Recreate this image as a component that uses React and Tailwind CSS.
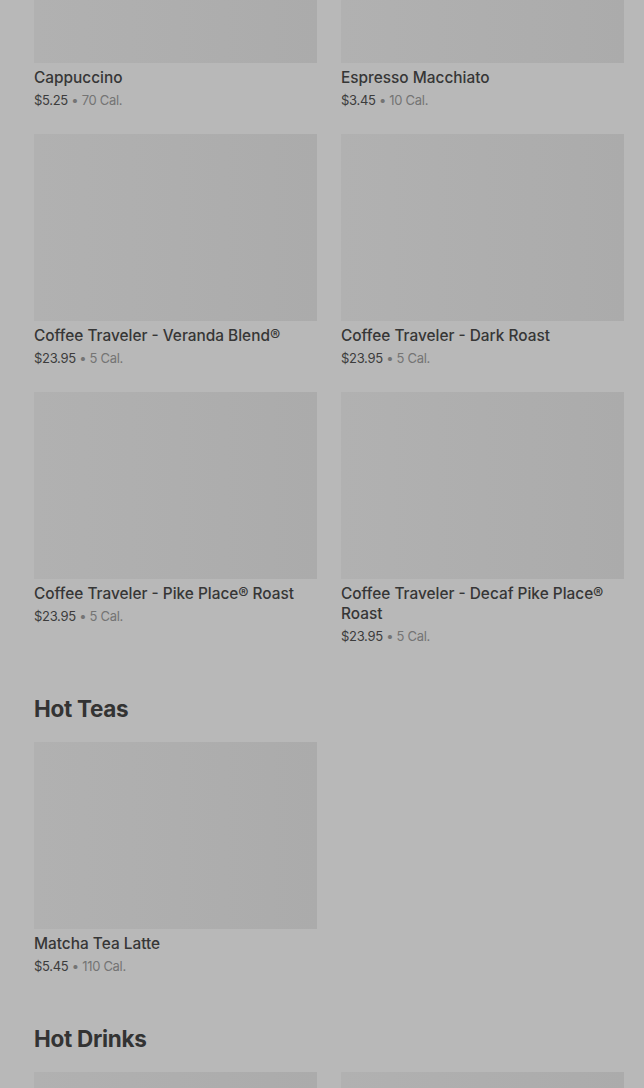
const sections = [
  {
    title: null,
    items: [
      { name: 'Cappuccino', price: '$5.25', cal: '70 Cal.' },
      { name: 'Espresso Macchiato', price: '$3.45', cal: '10 Cal.' },
      { name: 'Coffee Traveler - Veranda Blend®', price: '$23.95', cal: '5 Cal.' },
      { name: 'Coffee Traveler - Dark Roast', price: '$23.95', cal: '5 Cal.' },
      { name: 'Coffee Traveler - Pike Place® Roast', price: '$23.95', cal: '5 Cal.' },
      { name: 'Coffee Traveler - Decaf Pike Place® Roast', price: '$23.95', cal: '5 Cal.' },
    ],
  },
  {
    title: 'Hot Teas',
    items: [{ name: 'Matcha Tea Latte', price: '$5.45', cal: '110 Cal.' }],
  },
  {
    title: 'Hot Drinks',
    items: [{}, {}],
  },
]

function ItemCard({ item }) {
  return (
    <div className="flex flex-col">
      <div className="h-[187px] w-full bg-gradient-to-r from-[#b1b1b1] to-[#ababab]" />
      {item.name && (
        <>
          <div className="mt-[5px] text-[15.4px] leading-[20px] font-medium text-[#363636]">{item.name}</div>
          <div className="mt-[2px] text-[13px] leading-[20px] tracking-[-0.3px] text-[#3c3c3c]">
            {item.price} <span className="text-[#747474]">• {item.cal}</span>
          </div>
        </>
      )}
    </div>
  )
}

export default function App() {
  return (
    <div
      className="w-[644px] h-[1088px] overflow-hidden bg-[#b8b8b8] pl-[34px] pr-[20px]"
      style={{ fontFamily: 'Inter, "Noto Sans", sans-serif' }}
    >
      <div className="-mt-[124px]">
        {sections.map((section, si) => (
          <div key={si} className={section.title ? 'mt-[47px]' : ''}>
            {section.title && (
              <h2 className="mb-[17px] text-[22.5px] leading-[32px] font-bold tracking-[-0.3px] text-[#333333]">
                {section.title}
              </h2>
            )}
            <div className="grid grid-cols-2 gap-x-[24px] gap-y-[24px]">
              {section.items.map((item, i) => (
                <ItemCard key={i} item={item} />
              ))}
            </div>
          </div>
        ))}
      </div>
    </div>
  )
}
